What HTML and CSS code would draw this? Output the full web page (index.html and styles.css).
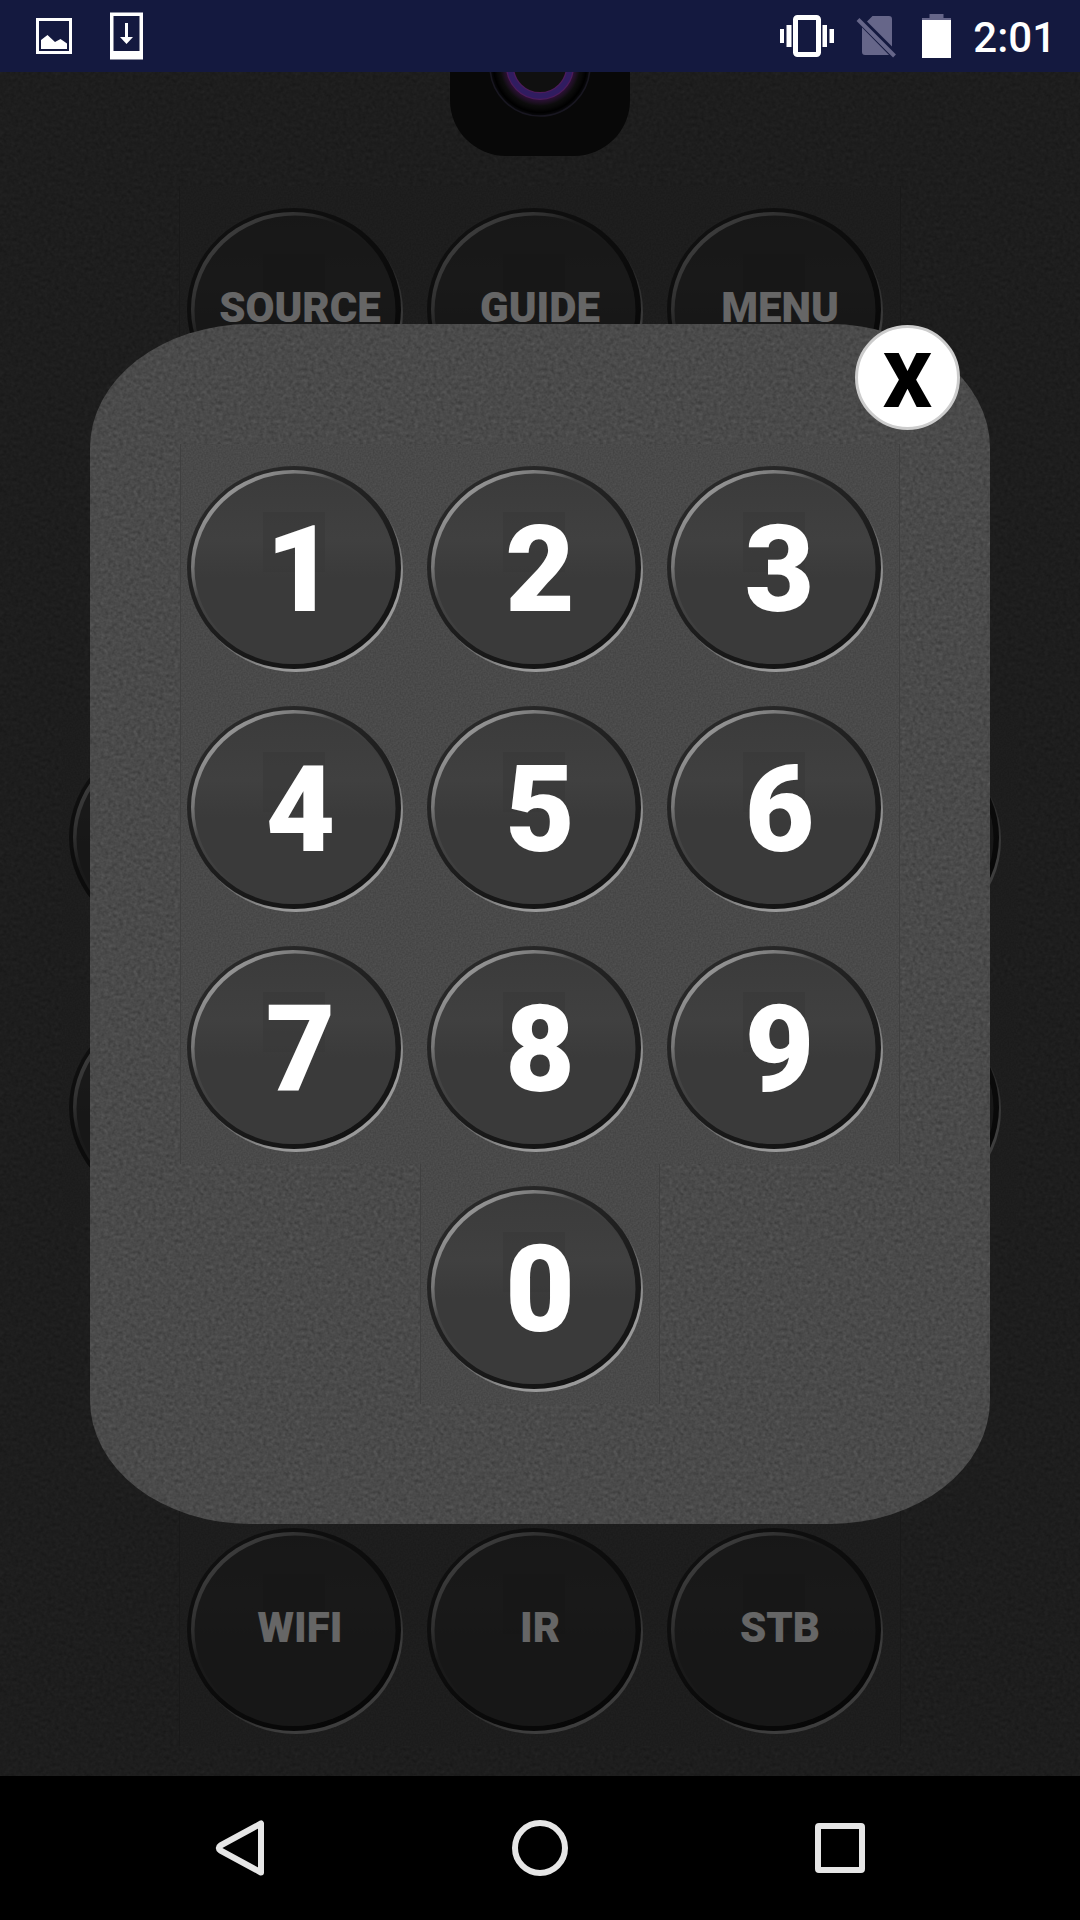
FILE: index.html
```html
<!DOCTYPE html>
<html lang="en">
<head>
<meta charset="utf-8">
<meta name="viewport" content="width=device-width, initial-scale=1">
<title>Remote</title>
<link rel="stylesheet" href="styles.css">
</head>
<body>
<header class="status">
  <div class="status-group status-notes">
    <svg class="icon" width="36" height="36" viewBox="0 0 36 36" aria-hidden="true">
      <rect x="1.5" y="1.5" width="33" height="33" fill="none" stroke="#fff" stroke-width="3"/>
      <path d="M5 31V22L11.500 17L19 24L24.500 21L31 25.500V31Z" fill="#fff"/>
    </svg>
    <svg class="icon" width="33" height="48" viewBox="0 0 33 48" aria-hidden="true">
      <path fill="#fff" fill-rule="evenodd" d="M0 0.500H33V47.500H0ZM3.500 4V39H29.500V4Z"/>
      <path fill="#fff" d="M15 11H18V25H23L16.500 32L10 25H15Z"/>
    </svg>
  </div>
  <div class="status-group status-system">
    <svg class="icon" width="54" height="42" viewBox="0 0 54 42" aria-hidden="true">
      <path fill="#fff" d="M0 14h4v14H0zM6.500 10h5v22h-5zM42.500 10h4.500v22h-4.500zM49.500 14h4.500v14h-4.500z"/>
      <rect x="15.500" y="2.500" width="23" height="37" rx="2" fill="none" stroke="#fff" stroke-width="5"/>
    </svg>
    <svg class="icon" width="40" height="44" viewBox="0 0 40 44" aria-hidden="true">
      <path fill="#666689" d="M16.500 2H33q3 0 3 3V32.500L11 7.500ZM6 13.500L33 41H9q-3 0-3-3Z"/>
      <path d="M2 5.500L38.500 42" stroke="#666689" stroke-width="4" fill="none"/>
    </svg>
    <svg class="icon" width="29" height="44" viewBox="0 0 29 44" aria-hidden="true">
      <path fill="#666689" d="M7.500 0h14v4H29v3H0V4h7.500z"/>
      <path fill="#fff" d="M0 6h29v38H0z"/>
    </svg>
    <time class="clock">2:01</time>
  </div>
</header>

<main class="stage">
  <div class="remote">
    <div class="power">
      <svg width="180" height="180" viewBox="0 0 180 180" aria-hidden="true">
        <defs>
          <radialGradient id="well">
            <stop offset="0.660" stop-color="#3a3a3a"/>
            <stop offset="0.850" stop-color="#161616"/>
            <stop offset="0.930" stop-color="#000"/>
            <stop offset="1" stop-color="#1c1c26"/>
          </radialGradient>
          <radialGradient id="glow">
            <stop offset="0.600" stop-color="#8a20b0" stop-opacity="0"/>
            <stop offset="0.800" stop-color="#8a20b0" stop-opacity="0.800"/>
            <stop offset="1" stop-color="#8a20b0" stop-opacity="0"/>
          </radialGradient>
        </defs>
        <circle cx="90" cy="90" r="50" fill="url(#well)" stroke="#3c3850" stroke-width="1.500"/>
        <circle cx="90" cy="90" r="40" fill="url(#glow)"/>
        <circle cx="90" cy="90" r="30" fill="#2a2a2a" stroke="#c044e0" stroke-width="8"/>
        <circle cx="90" cy="90" r="30" fill="none" stroke="#7848f0" stroke-width="5.500"/>
      </svg>
    </div>
    <div class="keys labels">
      <button class="key" type="button">SOURCE</button>
      <button class="key" type="button">GUIDE</button>
      <button class="key" type="button">MENU</button>
    </div>
    <div class="rockers">
      <div class="rocker"><div class="key"></div><div class="key"></div></div>
      <div class="rocker"><div class="key"></div><div class="key"></div></div>
    </div>
    <div class="keys labels">
      <button class="key" type="button">WIFI</button>
      <button class="key" type="button">IR</button>
      <button class="key" type="button">STB</button>
    </div>
  </div>

  <div class="scrim">
    <section class="pad" role="dialog">
      <button class="close" type="button">X</button>
      <div class="keys digits">
        <button class="key" type="button">1</button>
        <button class="key" type="button">2</button>
        <button class="key" type="button">3</button>
        <button class="key" type="button">4</button>
        <button class="key" type="button">5</button>
        <button class="key" type="button">6</button>
        <button class="key" type="button">7</button>
        <button class="key" type="button">8</button>
        <button class="key" type="button">9</button>
        <button class="key zero" type="button">0</button>
      </div>
    </section>
  </div>
</main>

<nav class="navbar">
  <button class="nav-button" type="button">
    <svg width="60" height="60" viewBox="0 0 60 60" aria-hidden="true">
      <path d="M51 5.500V54.500L10.500 32.500Q7 30 10.500 27.500Z" fill="none" stroke="#e6e6e6" stroke-width="6" stroke-linejoin="round"/>
    </svg>
  </button>
  <button class="nav-button" type="button">
    <svg width="60" height="60" viewBox="0 0 60 60" aria-hidden="true">
      <circle cx="30" cy="30" r="25" fill="none" stroke="#e6e6e6" stroke-width="6"/>
    </svg>
  </button>
  <button class="nav-button" type="button">
    <svg width="60" height="60" viewBox="0 0 60 60" aria-hidden="true">
      <path fill="#e6e6e6" fill-rule="evenodd" d="M9 5H51q4 0 4 4V51q0 4-4 4H9q-4 0-4-4V9q0-4 4-4ZM11 11V49H49V11Z"/>
    </svg>
  </button>
</nav>
</body>
</html>
```
FILE: styles.css
```css
:root {
  --grain: url("data:image/svg+xml,%3Csvg xmlns='http://www.w3.org/2000/svg' width='240' height='240'%3E%3Cfilter id='n' x='0' y='0' width='100%25' height='100%25' color-interpolation-filters='sRGB'%3E%3CfeTurbulence type='fractalNoise' baseFrequency='.27' numOctaves='2' seed='4' stitchTiles='stitch'/%3E%3CfeColorMatrix values='.07 .07 .07 0 .185 .07 .07 .07 0 .185 .07 .07 .07 0 .185 0 0 0 0 1'/%3E%3C/filter%3E%3Crect width='240' height='240' filter='url(%23n)'/%3E%3C/svg%3E");
  --fine-grain: url("data:image/svg+xml,%3Csvg xmlns='http://www.w3.org/2000/svg' width='240' height='240'%3E%3Cfilter id='n' x='0' y='0' width='100%25' height='100%25' color-interpolation-filters='sRGB'%3E%3CfeTurbulence type='fractalNoise' baseFrequency='.6' numOctaves='1' seed='9' stitchTiles='stitch'/%3E%3CfeColorMatrix values='.09 0 0 0 .243 .09 0 0 0 .243 .09 0 0 0 .243 0 0 0 0 1'/%3E%3C/filter%3E%3Crect width='240' height='240' filter='url(%23n)'/%3E%3C/svg%3E");
  --dome: url("data:image/svg+xml,%3Csvg xmlns='http://www.w3.org/2000/svg' viewBox='0 0 240 240'%3E%3Cdefs%3E%3ClinearGradient id='a' x1='.15' y1='.1' x2='.75' y2='.95'%3E%3Cstop offset='.5' stop-color='%23999' stop-opacity='0'/%3E%3Cstop offset='.85' stop-color='%23999'/%3E%3C/linearGradient%3E%3ClinearGradient id='b' x1='.2' y1='0' x2='.8' y2='1'%3E%3Cstop offset='0' stop-color='%232a2a2a'/%3E%3Cstop offset='.5' stop-color='%231e1e1e'/%3E%3Cstop offset='1' stop-color='%23111'/%3E%3C/linearGradient%3E%3ClinearGradient id='c' x1='.15' y1='.1' x2='.6' y2='.6'%3E%3Cstop offset='0' stop-color='%23999'/%3E%3Cstop offset='.3' stop-color='%23777'/%3E%3Cstop offset='.5' stop-color='%23444'/%3E%3Cstop offset='1' stop-color='%233a3a3a'/%3E%3C/linearGradient%3E%3ClinearGradient id='d' x1='0' y1='0' x2='0' y2='1'%3E%3Cstop offset='0' stop-color='%233b3b3b'/%3E%3Cstop offset='.35' stop-color='%23404040'/%3E%3Cstop offset='.55' stop-color='%233a3a3a'/%3E%3Cstop offset='1' stop-color='%233a3a3a'/%3E%3C/linearGradient%3E%3C/defs%3E%3Cellipse cx='116' cy='126' rx='107' ry='102' fill='url(%23a)'/%3E%3Cellipse cx='114' cy='123.500' rx='107' ry='101.500' fill='url(%23b)'/%3E%3Cellipse cx='113' cy='123' rx='102' ry='97' fill='url(%23c)'/%3E%3Cellipse cx='115' cy='124.500' rx='100.500' ry='95' fill='url(%23d)'/%3E%3Crect x='83' y='68' width='62' height='60' fill='%23393939' opacity='.6'/%3E%3C/svg%3E");
}

* {
  box-sizing: border-box;
}

body {
  margin: 0;
  min-height: 100vh;
  display: flex;
  flex-direction: column;
  background: #000;
  font-family: Roboto, "Noto Sans", sans-serif;
}

button {
  margin: 0;
  padding: 0;
  border: 0;
  background: none;
  font-family: inherit;
  color: inherit;
  cursor: pointer;
}

svg {
  display: block;
}

/* Status bar */
.status {
  position: relative;
  z-index: 1;
  height: 72px;
  padding: 0 24px 0 36px;
  display: flex;
  align-items: center;
  justify-content: space-between;
  background: #14193f;
  color: #fff;
}

.status-group {
  display: flex;
  align-items: center;
}

.status-notes {
  gap: 38px;
}

.status-system {
  gap: 22px;
}

.icon {
  flex: none;
}

.status-system .icon + .icon + .icon {
  margin-left: 4px;
}

.clock {
  padding-top: 4px;
  font-size: 42px;
  font-weight: 500;
  line-height: 48px;
}

/* Remote control behind the dialog */
.stage {
  position: relative;
  flex: 1;
  display: flex;
  flex-direction: column;
  overflow: hidden;
  background: var(--grain);
}

.remote {
  flex: 1;
  display: flex;
  flex-direction: column;
  align-items: center;
  gap: 30px;
  margin-top: -96px;
  padding-bottom: 30px;
}

.power {
  width: 180px;
  height: 180px;
  border-radius: 56px;
  background: #141414;
}

.keys {
  display: grid;
  grid-template-columns: repeat(3, 240px);
  justify-content: center;
}

.key {
  width: 240px;
  height: 240px;
  background: var(--dome), var(--fine-grain);
  color: #fff;
  font-weight: 900;
}

.labels {
  box-shadow: -1px 0 #404040, 1px 0 #404040;
}

.labels .key {
  padding-top: 2px;
  font-size: 42px;
}

.rockers {
  flex: 1;
  align-self: stretch;
  display: flex;
  align-items: center;
  justify-content: space-between;
  padding: 6px 62px 0;
}

.rocker {
  display: grid;
  gap: 30px;
}

/* Number pad dialog */
.scrim {
  position: absolute;
  inset: 0;
  display: flex;
  align-items: center;
  padding: 0 90px;
  background: rgba(0, 0, 0, 0.6);
}

.pad {
  position: relative;
  flex: 1;
  padding: 120px 0;
  border-radius: 160px / 124px;
  background: var(--grain);
}

.digits .key {
  padding-top: 12px;
  background-origin: border-box;
  font-size: 120px;
}

.digits .key:nth-child(3n + 1) {
  border-left: 1px solid #404040;
}

.digits .key:nth-child(3n) {
  border-right: 1px solid #404040;
}

.digits .key.zero {
  grid-column: 2;
  border-right: 1px solid #404040;
}

.close {
  position: absolute;
  top: 1px;
  right: 30px;
  width: 105px;
  height: 105px;
  padding-top: 6px;
  border: 3px solid #ccc;
  border-radius: 50%;
  background: #fff;
  color: #000;
  font-size: 76px;
  font-weight: 900;
  line-height: 90px;
}

/* System navigation */
.navbar {
  height: 144px;
  padding: 0 90px;
  display: flex;
  background: #000;
}

.nav-button {
  flex: 1;
  display: flex;
  align-items: center;
  justify-content: center;
}
```
